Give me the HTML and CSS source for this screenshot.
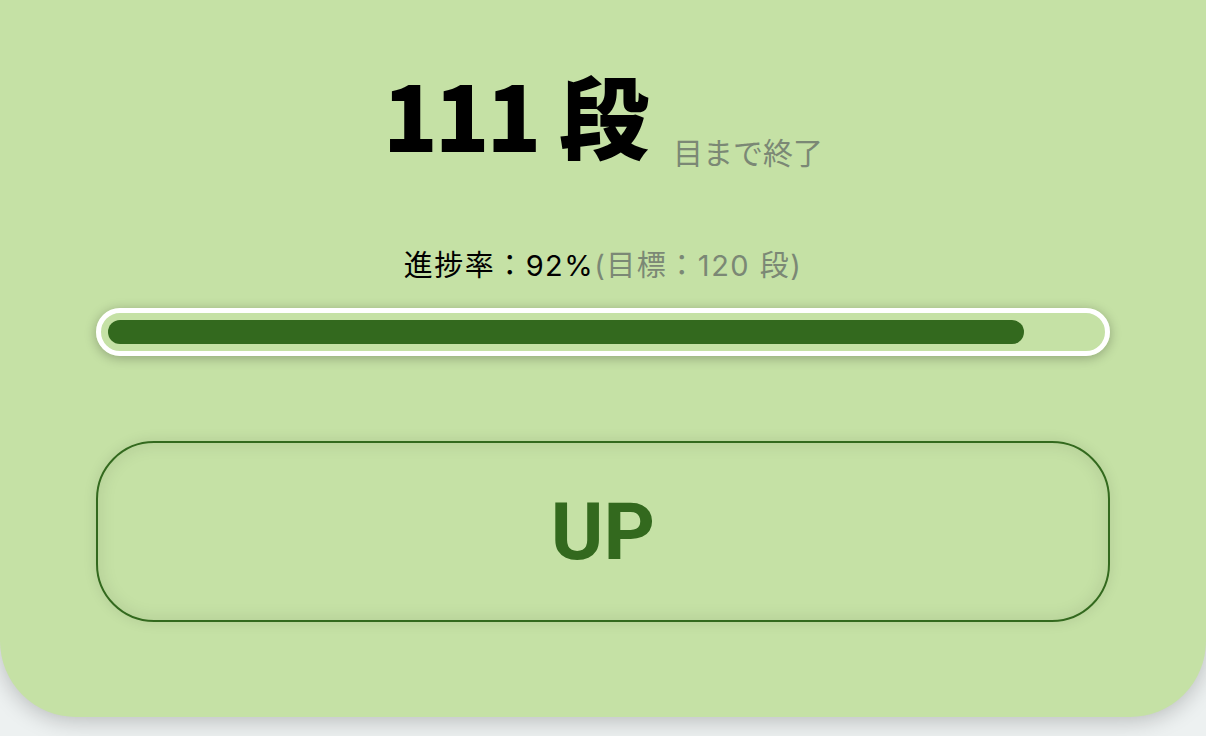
FILE: index.html
```html
<!DOCTYPE html>
<html lang="ja">
<head>
<meta charset="utf-8">
<title>段数カウンター</title>
<link rel="stylesheet" href="styles.css">
</head>
<body>
<main class="card">
  <h1 class="count"><span class="count-num"><span class="count-digits">111</span> 段</span><span class="count-sub">目まで終了</span></h1>
  <p class="progress-label">進捗率：92%<span class="progress-goal">(目標：120 段)</span></p>
  <div class="track"><div class="fill" style="width: 92.5%"></div></div>
  <button class="up-btn" type="button">UP</button>
</main>
</body>
</html>
```
FILE: styles.css
```css
* { box-sizing: border-box; }
html, body { margin: 0; padding: 0; }
body {
  background: #edf1f1;
  font-family: "Noto Sans CJK JP", "Noto Sans", sans-serif;
  height: 736px;
  overflow: hidden;
}
.card {
  background: #c5e1a5;
  border-radius: 0 0 76px 76px;
  box-shadow: 0 4px 22px rgba(0, 0, 0, 0.22);
  padding: 68px 96px 95px;
  display: flex;
  flex-direction: column;
  align-items: stretch;
}
.count {
  margin: 0;
  text-align: center;
  font-size: 90px;
  line-height: 90px;
  font-weight: 900;
  color: #000;
}
.count-digits {
  letter-spacing: -3px;
}
.count-sub {
  font-size: 30px;
  line-height: 30px;
  font-weight: 400;
  color: #7b8875;
  margin-left: 24px;
  vertical-align: -12px;
}
.progress-label {
  margin: 86px 0 0;
  text-align: center;
  font-family: Inter, "Noto Sans CJK JP", sans-serif;
  font-size: 29px;
  line-height: 28px;
  letter-spacing: 1.5px;
  color: #000;
}
.progress-goal {
  color: #7b8875;
}
.track {
  margin-top: 28px;
  height: 48px;
  border: 5px solid #fff;
  border-radius: 24px;
  padding: 7px;
  box-shadow: 0 2px 12px rgba(0, 0, 0, 0.28);
}
.fill {
  height: 24px;
  border-radius: 12px;
  background: #33691e;
}
.up-btn {
  margin-top: 85px;
  height: 181px;
  width: 100%;
  background: #c5e1a5;
  border: 2.5px solid #33691e;
  border-radius: 58px;
  box-shadow: 0 0 14px rgba(0, 0, 0, 0.1), inset 0 0 18px rgba(0, 0, 0, 0.1);
  font-family: Roboto, "Noto Sans", sans-serif;
  font-weight: 700;
  font-size: 80px;
  color: #33691e;
  padding: 0;
  cursor: pointer;
}
```
